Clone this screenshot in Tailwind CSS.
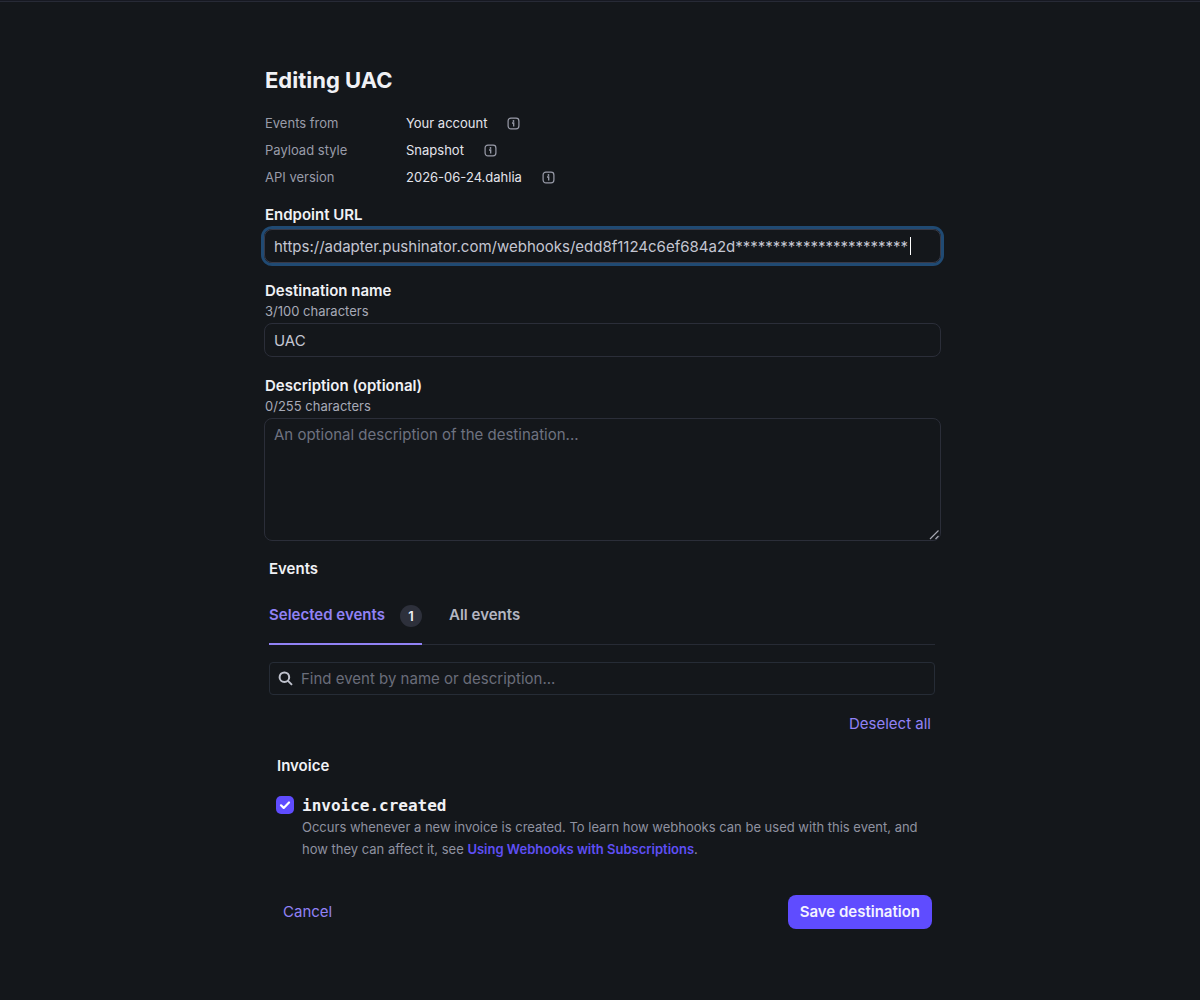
<!DOCTYPE html>
<html lang="en">
<head>
<meta charset="utf-8">
<meta name="viewport" content="width=device-width, initial-scale=1">
<title>Editing UAC</title>
<script src="https://cdn.jsdelivr.net/npm/@tailwindcss/browser@4"></script>
</head>
<body class="min-h-screen bg-[#14171b] font-['Inter',sans-serif] text-[15px] leading-5 text-[#f0f1f5]">
<div class="h-[2px] border-b border-[#272a36] bg-[#171922]"></div>
<svg class="hidden">
  <symbol id="info" viewBox="0 0 13 13">
    <rect x="1.1" y="1.1" width="10.8" height="10.8" rx="2.8" fill="none" stroke="currentColor" stroke-width="1.2"/>
    <path d="M5 6h1.7v3.6" fill="none" stroke="currentColor" stroke-width="1.3"/>
    <circle cx="6.5" cy="4" r="0.9" fill="currentColor"/>
  </symbol>
</svg>
<main class="mx-auto w-full max-w-[682px] pt-[62px] pl-[5px]">
  <h1 class="pl-px text-[22px] leading-8 font-bold">Editing UAC</h1>

  <dl class="mt-[14px] grid grid-cols-[141px_1fr] pl-px text-[13px] leading-[27px]">
    <dt class="text-[#999ca9]">Events from</dt>
    <dd class="flex items-center gap-5 text-[#e3e4ec]">Your account <svg class="size-[13px] text-[#999ca9]"><use href="#info"/></svg></dd>
    <dt class="text-[#999ca9]">Payload style</dt>
    <dd class="flex items-center gap-5 text-[#e3e4ec]">Snapshot <svg class="size-[13px] text-[#999ca9]"><use href="#info"/></svg></dd>
    <dt class="text-[#999ca9]">API version</dt>
    <dd class="flex items-center gap-5 text-[#e3e4ec]">2026-06-24.dahlia <svg class="size-[13px] text-[#999ca9]"><use href="#info"/></svg></dd>
  </dl>

  <form>
    <div class="mt-[14px]">
      <label for="url" class="block pl-px font-semibold">Endpoint URL</label>
      <div class="relative mt-1">
        <input id="url" type="text" value="https://adapter.pushinator.com/webhooks/edd8f1124c6ef684a2d***********************" class="block h-[34px] w-full rounded-lg border border-[#383a48] px-[9px] text-[15px] text-[#c4c6d2] ring-3 ring-[#204a73] outline-none">
        <span class="absolute top-2 right-[30px] h-[18px] w-px bg-white"></span>
      </div>
    </div>

    <div class="mt-[18px]">
      <label for="name" class="block pl-px font-semibold">Destination name</label>
      <p class="pl-px text-[13px] text-[#a7aab7]">3/100 characters</p>
      <input id="name" type="text" value="UAC" class="mt-[2px] block h-[34px] w-full rounded-lg border border-[#2b2e39] px-[9px] text-[15px] text-[#c4c6d2] outline-none">
    </div>

    <div class="mt-[19px]">
      <label for="description" class="block pl-px font-semibold">Description (optional)</label>
      <p class="pl-px text-[13px] text-[#a7aab7]">0/255 characters</p>
      <div class="relative mt-[2px]">
        <textarea id="description" placeholder="An optional description of the destination..." class="block h-[123px] w-full resize-none rounded-lg border border-[#2b2e39] px-[9px] py-[6px] text-[15px] outline-none placeholder:text-[#6e7280]"></textarea>
        <svg class="pointer-events-none absolute right-[1px] bottom-[1px] size-[11px] text-[#a6a8b2]" viewBox="0 0 11 11" fill="none" stroke="currentColor" stroke-width="1.2"><path d="M1 10l8.500-8.500M6.500 10l3-3"/></svg>
      </div>
    </div>

    <section class="pr-[6px] pl-[5px]">
      <h2 class="mt-[18px] font-semibold">Events</h2>
      <div class="mt-[26px] flex gap-[27px] border-b border-[#272b35] font-semibold" role="tablist">
        <button type="button" role="tab" aria-selected="true" class="-mb-px flex h-[40px] min-w-[153px] items-start justify-between border-b-2 border-[#9182f5] text-[#9182f5]">
          <span>Selected events</span>
          <span class="flex size-[22px] items-center justify-center rounded-full bg-[#2d303b] text-[13px] text-[#eeeff4]">1</span>
        </button>
        <button type="button" role="tab" aria-selected="false" class="flex h-[39px] items-start text-[#b4b6c2]">All events</button>
      </div>

      <div class="relative mt-[17px]">
        <input type="search" aria-label="Find event" placeholder="Find event by name or description..." class="block h-[33px] w-full rounded-[4px] border border-[#262c36] pr-2 pl-[31px] text-[15px] outline-none placeholder:text-[#6a6d7a]">
        <svg class="absolute top-[9px] left-[9px] size-[15px] text-[#c0c3ce]" viewBox="0 0 15 15" fill="none" stroke="currentColor" stroke-width="2"><circle cx="6.4" cy="6.2" r="4.8"/><path d="M10 9.9l4 4"/></svg>
      </div>
      <div class="mt-[19px] flex justify-end pr-1">
        <button type="button" class="text-[#9182f5]">Deselect all</button>
      </div>

      <h3 class="mt-[22px] pl-2 font-semibold">Invoice</h3>
      <div class="mt-[20px] grid grid-cols-[18px_1fr] gap-x-2 pl-[7px]">
        <span class="relative block size-[18px]">
          <input id="invoice-created" type="checkbox" checked class="block size-[18px] appearance-none rounded-[5px] checked:bg-[#5f4cff]">
          <svg class="pointer-events-none absolute inset-0 size-[18px]" viewBox="0 0 18 18" fill="none" stroke="white" stroke-width="2.2" stroke-linecap="round" stroke-linejoin="round"><path d="M5 9.300l2.700 2.600L13 6.500"/></svg>
        </span>
        <label for="invoice-created" class="font-['DejaVu_Sans_Mono',monospace] text-[16px] font-bold">invoice.created</label>
        <p class="col-start-2 text-[13px] leading-[22px] text-[#8f92a0]">Occurs whenever a new invoice is created. To learn how webhooks can be used with this event, and how they can affect it, see <a href="#" class="font-semibold text-[#5f4ff5]">Using Webhooks with Subscriptions</a>.</p>
      </div>
    </section>

    <div class="mt-[35px] flex items-center justify-between pr-[9px] pl-[19px]">
      <button type="button" class="text-[#9182f5]">Cancel</button>
      <button type="submit" class="h-[34px] rounded-lg bg-[#5f4cff] px-3 font-semibold text-[#f4f3ff]">Save destination</button>
    </div>
  </form>
</main>
</body>
</html>
